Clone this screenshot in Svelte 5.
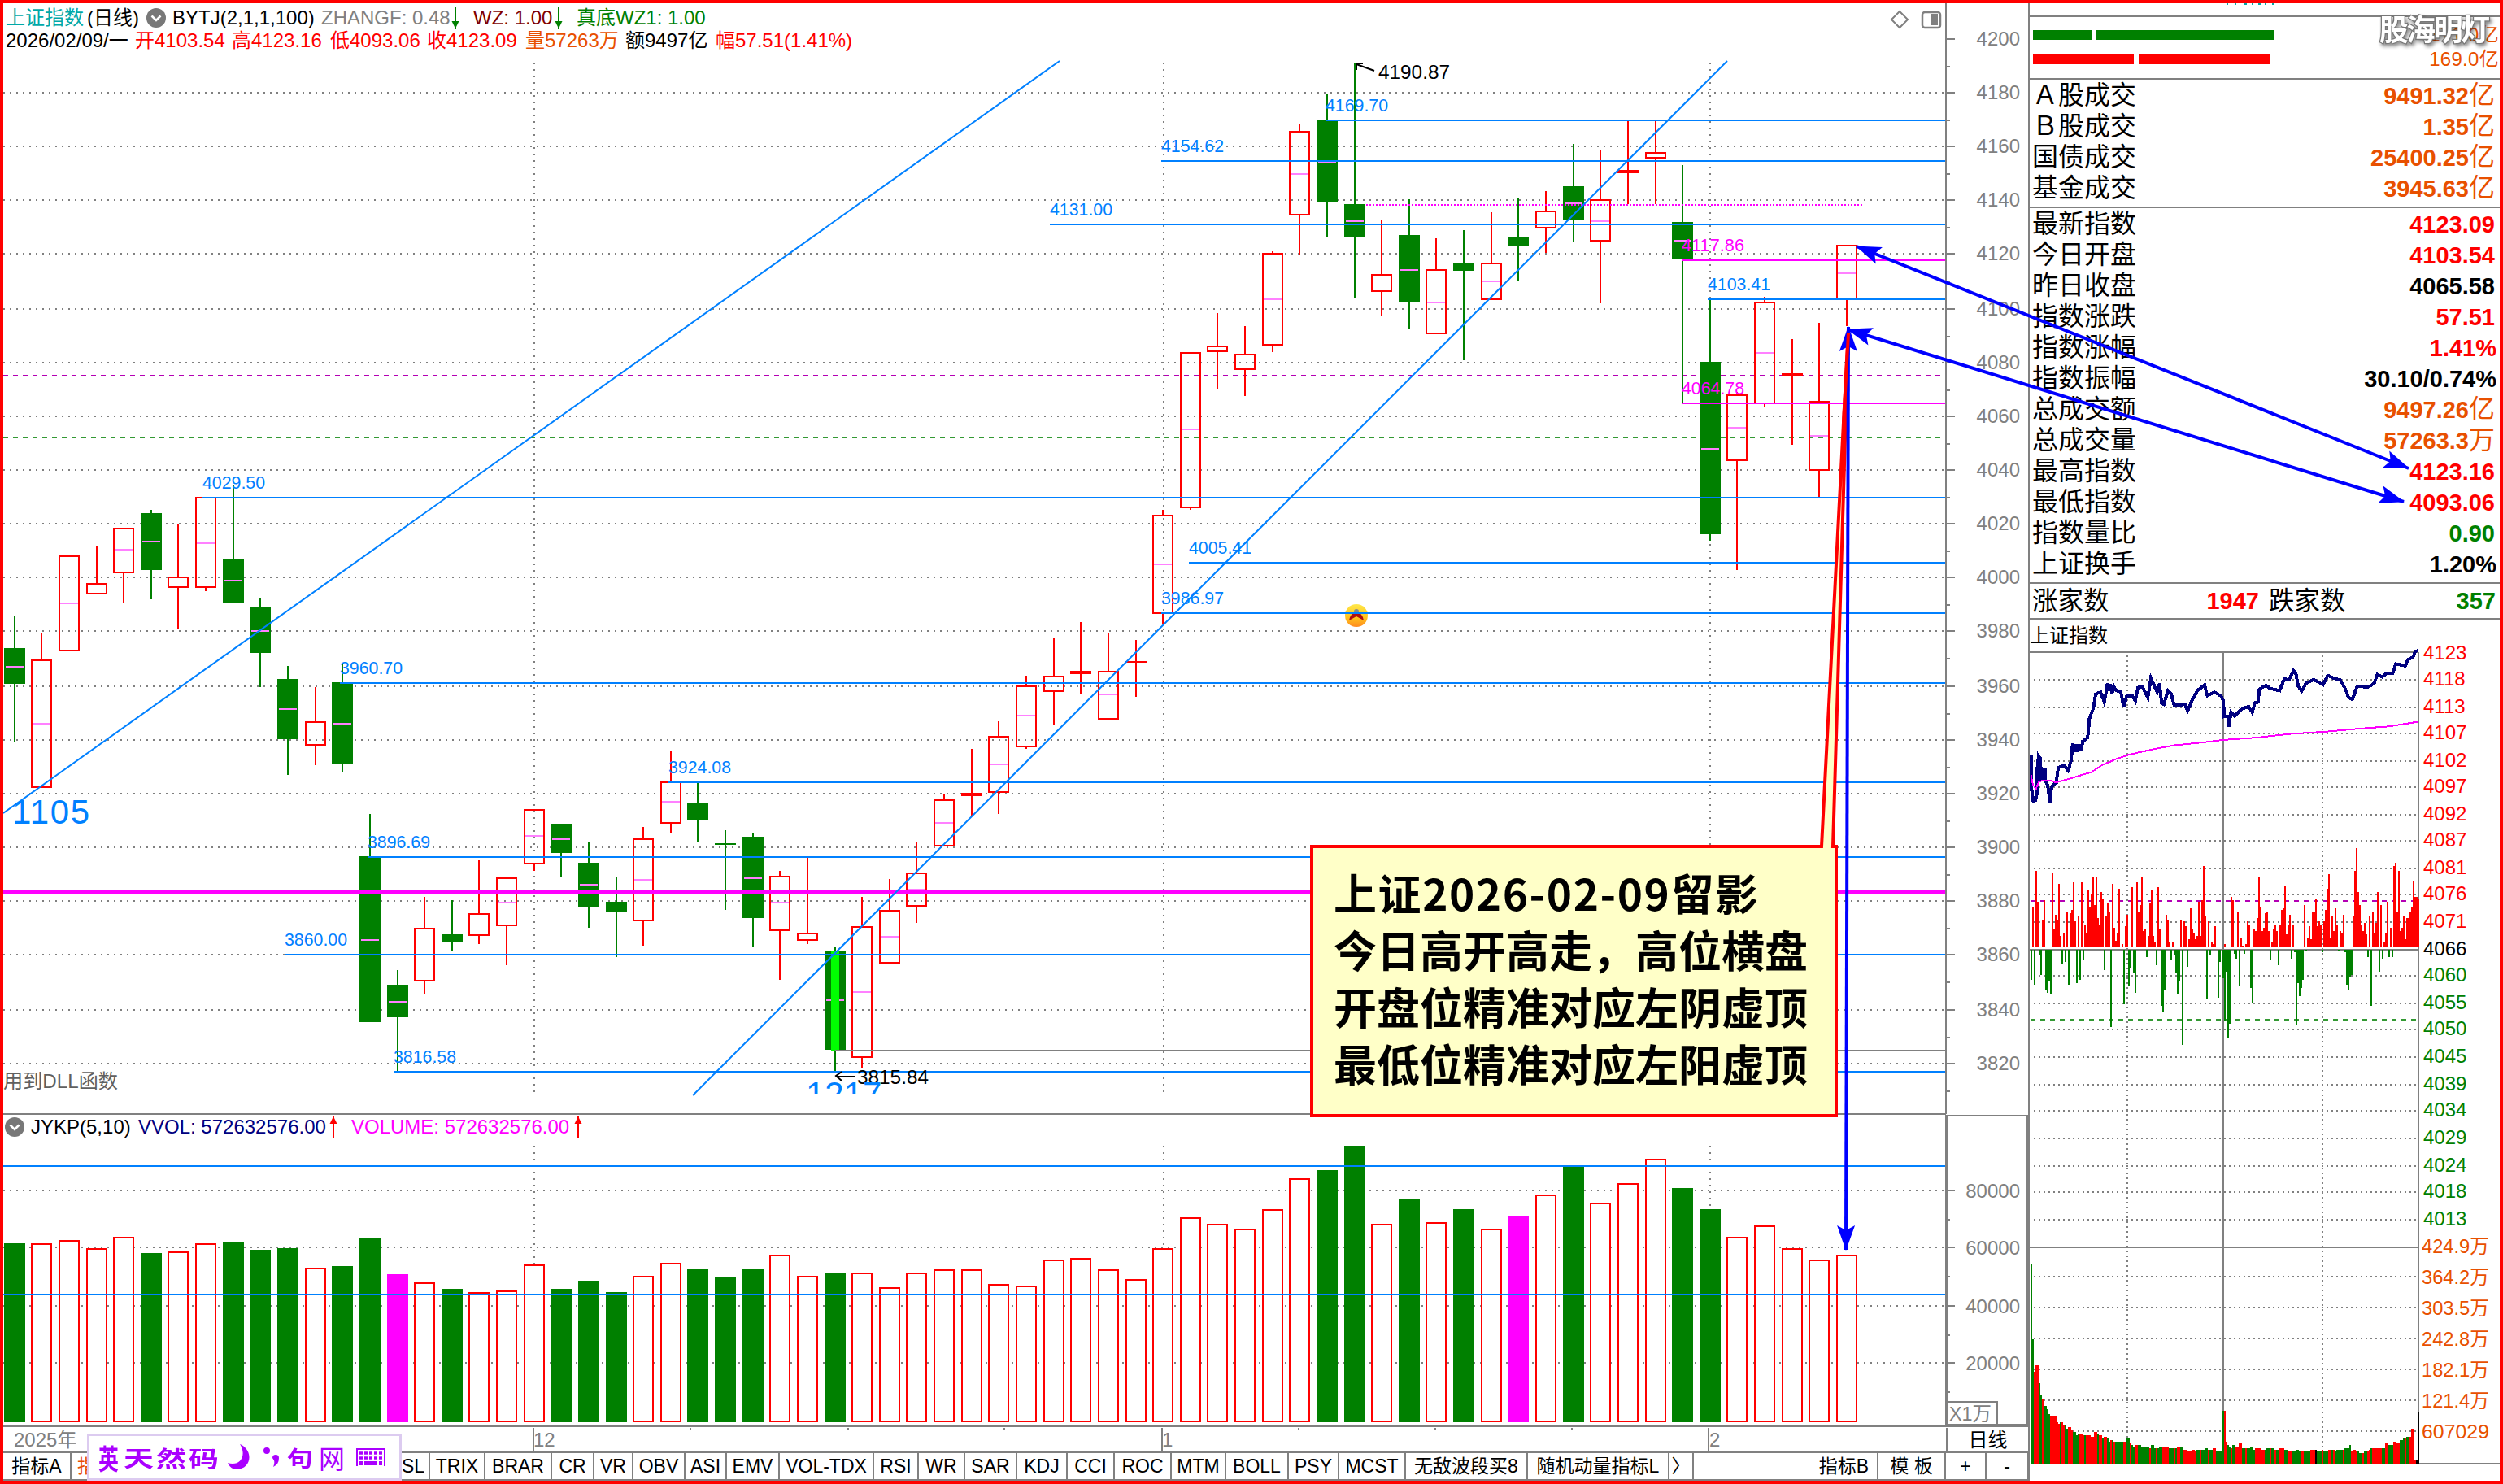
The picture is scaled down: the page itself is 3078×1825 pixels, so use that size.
<script lang="ts">
	type Candle = {
		up: boolean;
		high: number;
		top: number;
		bottom: number;
		low: number;
		mid: number;
	};

	const BAR_START = 17.7;
	const BAR_STEP = 33.63;
	const barX = (i: number) => Math.round(BAR_START + i * BAR_STEP);

	// direction, high, body top, body bottom, low, midpoint (0 = no mark)
	const rawCandles: [string, number, number, number, number, number][] = [
		['g', 757, 797, 841, 913, 820],
		['r', 779, 812, 968, 968, 890],
		['r', 683, 684, 800, 800, 742],
		['r', 671, 718, 730, 730, 0],
		['r', 650, 650, 704, 741, 676],
		['g', 627, 631, 701, 737, 666],
		['r', 645, 710, 722, 773, 0],
		['r', 612, 612, 722, 727, 668],
		['g', 597, 687, 741, 741, 714],
		['g', 735, 747, 803, 845, 776],
		['g', 819, 835, 909, 953, 872],
		['r', 845, 888, 916, 941, 0],
		['g', 817, 839, 939, 949, 890],
		['g', 1001, 1053, 1257, 1257, 1156],
		['g', 1193, 1211, 1251, 1318, 1232],
		['r', 1103, 1142, 1206, 1223, 0],
		['g', 1107, 1149, 1159, 1169, 0],
		['r', 1057, 1124, 1150, 1161, 0],
		['r', 1080, 1080, 1138, 1187, 1110],
		['r', 996, 996, 1062, 1071, 1028],
		['g', 1013, 1013, 1049, 1079, 1032],
		['g', 1035, 1061, 1115, 1141, 1088],
		['g', 1079, 1109, 1121, 1177, 0],
		['r', 1017, 1032, 1132, 1163, 1082],
		['r', 923, 962, 1012, 1025, 986],
		['g', 962, 987, 1009, 1035, 0],
		['g', 1021, 1037, 1039, 1119, 0],
		['g', 1025, 1029, 1129, 1165, 1080],
		['r', 1071, 1078, 1144, 1205, 1110],
		['r', 1054, 1148, 1156, 1161, 0],
		['g', 1165, 1169, 1291, 1318, 1230],
		['r', 1103, 1140, 1300, 1313, 1220],
		['r', 1081, 1120, 1184, 1184, 1152],
		['r', 1035, 1074, 1114, 1135, 1094],
		['r', 977, 984, 1040, 1040, 1012],
		['r', 921, 976, 978, 1003, 0],
		['r', 887, 906, 974, 1001, 940],
		['r', 831, 844, 918, 921, 880],
		['r', 785, 832, 850, 891, 0],
		['r', 765, 826, 828, 853, 0],
		['r', 779, 826, 884, 884, 854],
		['r', 787, 814, 814, 857, 0],
		['r', 627, 634, 754, 767, 694],
		['r', 434, 434, 624, 627, 528],
		['r', 385, 426, 432, 479, 0],
		['r', 401, 436, 454, 487, 0],
		['r', 309, 312, 424, 433, 368],
		['r', 153, 162, 264, 313, 214],
		['g', 115, 147, 249, 291, 200],
		['g', 77, 251, 291, 367, 272],
		['r', 271, 338, 358, 389, 0],
		['g', 245, 289, 371, 405, 332],
		['r', 293, 332, 410, 410, 372],
		['g', 283, 323, 333, 443, 0],
		['r', 261, 324, 368, 368, 346],
		['g', 243, 291, 303, 345, 0],
		['r', 235, 260, 280, 311, 0],
		['g', 177, 229, 271, 297, 250],
		['r', 185, 246, 296, 373, 272],
		['r', 149, 210, 212, 251, 0],
		['r', 149, 188, 194, 251, 0],
		['g', 203, 273, 319, 495, 296],
		['g', 369, 445, 657, 665, 552],
		['r', 482, 486, 566, 701, 526],
		['r', 365, 372, 496, 500, 434],
		['r', 417, 460, 462, 547, 0],
		['r', 397, 494, 578, 611, 536],
		['r', 302, 302, 368, 401, 336]
	];

	const candles: Candle[] = rawCandles.map(([d, high, top, bottom, low, mid]) => ({
		up: d === 'r',
		high,
		top,
		bottom,
		low,
		mid
	}));

	const volumeTops = [
		1529, 1529, 1525, 1535, 1521, 1541, 1539, 1529, 1527, 1537, 1535, 1559, 1557, 1523, 1567, 1577,
		1585, 1589, 1587, 1555, 1585, 1575, 1589, 1569, 1553, 1561, 1571, 1561, 1543, 1569, 1565, 1565,
		1583, 1565, 1561, 1561, 1579, 1581, 1549, 1547, 1561, 1573, 1535, 1497, 1505, 1511, 1487, 1449,
		1439, 1409, 1505, 1475, 1503, 1487, 1511, 1495, 1469, 1435, 1479, 1455, 1425, 1461, 1487, 1521,
		1507, 1535, 1549, 1543
	];
	const volumeColors = 'grrrrgrrgggrggmrgrrrgggrrgggrrgrrrrrrrrrrrrrrrrrggrgrgrmrgrrrggrrrrr';

	const priceGrid = [
		114, 180, 246, 312, 380, 446, 512, 578, 644, 710, 776, 844, 910, 976, 1042, 1108, 1174, 1242, 1308
	];
	const priceTicks = [48, ...priceGrid].map((y, i) => ({ y, label: 4200 - i * 20 }));
	const monthLines = [657, 1431, 2103];

	const levels = [
		{ value: '4169.70', x: 1630, y: 148 },
		{ value: '4154.62', x: 1428, y: 198 },
		{ value: '4131.00', x: 1291, y: 276 },
		{ value: '4103.41', x: 2100, y: 368 },
		{ value: '4029.50', x: 249, y: 612 },
		{ value: '4005.41', x: 1462, y: 692 },
		{ value: '3986.97', x: 1428, y: 754 },
		{ value: '3960.70', x: 418, y: 840 },
		{ value: '3924.08', x: 822, y: 962 },
		{ value: '3896.69', x: 452, y: 1054 },
		{ value: '3860.00', x: 350, y: 1174 },
		{ value: '3816.58', x: 484, y: 1318 },
		{ value: '4117.86', x: 2068, y: 320, gap: true },
		{ value: '4064.78', x: 2068, y: 496, gap: true }
	];

	const volumeTicks = [
		{ y: 1464, label: '80000' },
		{ y: 1534, label: '60000' },
		{ y: 1606, label: '40000' },
		{ y: 1676, label: '20000' }
	];

	const quote = [
		{ text: '2026/02/09/一', w: 159, tone: 'black' },
		{ text: '开4103.54', w: 119, tone: 'red' },
		{ text: '高4123.16', w: 121, tone: 'red' },
		{ text: '低4093.06', w: 119, tone: 'red' },
		{ text: '收4123.09', w: 121, tone: 'red' },
		{ text: '量57263万', w: 123, tone: 'orange' },
		{ text: '额9497亿', w: 111, tone: 'black' },
		{ text: '幅57.51(1.41%)', w: 180, tone: 'red' }
	];

	const tabs = [
		{ label: '指标A', w: 84 },
		{ label: '指标', w: 401, tone: 'orange' },
		{ label: 'SL', w: 40 },
		{ label: 'TRIX', w: 68 },
		{ label: 'BRAR', w: 82 },
		{ label: 'CR', w: 52 },
		{ label: 'VR', w: 48 },
		{ label: 'OBV', w: 64 },
		{ label: 'ASI', w: 51 },
		{ label: 'EMV', w: 65 },
		{ label: 'VOL-TDX', w: 116 },
		{ label: 'RSI', w: 55 },
		{ label: 'WR', w: 57 },
		{ label: 'SAR', w: 64 },
		{ label: 'KDJ', w: 62 },
		{ label: 'CCI', w: 58 },
		{ label: 'ROC', w: 70 },
		{ label: 'MTM', w: 67 },
		{ label: 'BOLL', w: 77 },
		{ label: 'PSY', w: 62 },
		{ label: 'MCST', w: 82 },
		{ label: '无敌波段买8', w: 150 },
		{ label: '随机动量指标L', w: 174 },
		{ label: '〉', w: 30 },
		{ label: '指标B', w: 227, end: true },
		{ label: '模 板', w: 83 },
		{ label: '+', w: 50 },
		{ label: '-', w: 52 }
	];

	const turnover = [
		{ name: 'Ａ股成交', value: '9491.32', unit: '亿', tone: 'orange' },
		{ name: 'Ｂ股成交', value: '1.35', unit: '亿', tone: 'orange' },
		{ name: '国债成交', value: '25400.25', unit: '亿', tone: 'orange' },
		{ name: '基金成交', value: '3945.63', unit: '亿', tone: 'orange' }
	];

	const stats = [
		{ name: '最新指数', value: '4123.09', unit: '', tone: 'red' },
		{ name: '今日开盘', value: '4103.54', unit: '', tone: 'red' },
		{ name: '昨日收盘', value: '4065.58', unit: '', tone: 'black' },
		{ name: '指数涨跌', value: '57.51', unit: '', tone: 'red' },
		{ name: '指数涨幅', value: '1.41%', unit: '', tone: 'red' },
		{ name: '指数振幅', value: '30.10/0.74%', unit: '', tone: 'black' },
		{ name: '总成交额', value: '9497.26', unit: '亿', tone: 'orange' },
		{ name: '总成交量', value: '57263.3', unit: '万', tone: 'orange' },
		{ name: '最高指数', value: '4123.16', unit: '', tone: 'red' },
		{ name: '最低指数', value: '4093.06', unit: '', tone: 'red' },
		{ name: '指数量比', value: '0.90', unit: '', tone: 'green' },
		{ name: '上证换手', value: '1.20%', unit: '', tone: 'black' }
	];

	const dayTicks = [
		[802, '4123'], [836, '4118'], [870, '4113'], [902, '4107'], [936, '4102'], [968, '4097'],
		[1002, '4092'], [1034, '4087'], [1068, '4081'], [1100, '4076'], [1134, '4071'], [1168, '4066'],
		[1200, '4060'], [1234, '4055'], [1266, '4050'], [1300, '4045'], [1334, '4039'], [1366, '4034'],
		[1400, '4029'], [1434, '4024'], [1466, '4018'], [1500, '4013']
	].map(([y, label]) => ({ y: Number(y), label }));
	const dayVolumeTicks = [
		[1534, '424.9万'], [1572, '364.2万'], [1610, '303.5万'], [1648, '242.8万'], [1686, '182.1万'],
		[1724, '121.4万'], [1762, '607029']
	].map(([y, label]) => ({ y: Number(y), label: String(label) }));

	const dayTone = (y: number) => (y < 1168 ? 'red' : y > 1168 ? 'green' : 'black');

	const dayX = (v: number) => 2480 + v / 2.622;
	const dayY = (v: number) => 760 + v / 2.8;
	const toPoints = (s: string) =>
		s
			.split(' ')
			.map((p) => p.split(',').map(Number))
			.map(([x, y]) => `${dayX(x).toFixed(1)},${dayY(y).toFixed(1)}`)
			.join(' ');

	const pricePath = toPoints(
		'44,470 46,595 51,632 58,628 63,605 64,515 68,475 73,482 77,560 82,520 88,522 90,560 97,575 105,638 110,580 125,567 131,515 150,508 163,525 172,495 178,432 183,462 189,435 194,462 200,435 205,458 210,425 226,412 232,345 245,310 252,262 268,255 280,290 290,225 295,252 300,228 305,260 310,235 318,250 333,255 343,308 352,270 370,268 380,285 388,240 402,236 420,275 430,207 450,255 458,225 464,292 472,297 485,250 495,260 505,300 540,298 548,320 560,290 580,250 603,230 612,268 635,255 655,268 664,285 666,340 680,338 682,375 688,325 700,338 725,312 745,305 757,325 765,292 775,290 780,245 800,232 815,243 845,250 860,210 875,213 890,180 897,188 905,235 916,252 930,225 955,212 985,230 1000,198 1020,208 1040,213 1055,240 1068,275 1080,280 1095,235 1130,238 1150,225 1160,195 1175,203 1190,190 1210,190 1220,158 1250,165 1260,142 1275,135 1282,115 1292,112'
	);
	const averagePath = toPoints(
		'43,540 50,575 60,588 68,565 80,560 105,560 125,566 160,556 200,543 240,530 270,508 320,485 360,470 430,454 500,439 600,428 660,420 770,412 880,399 1000,391 1100,381 1200,373 1292,357'
	);

	const parseBars = (s: string) =>
		s
			.trim()
			.split(/\s+/)
			.map((p) => p.split(':').map(Number))
			.map(([x, y]) => ({ x: 2496 + Math.round((x - 42) / 5.24) * 2, y: dayY(y) }));

	const buyBars = parseBars(`47:994 58:871 63:977 79:1040 84:972 110:876 115:1073 120:1022 126:1039 131:916 136:1095
		147:1084 157:1011 168:1016 173:1005 178:910 184:1044 194:1028 205:910 215:1056 220:1084 225:938 231:994 236:949
		241:893 246:988 252:893 257:1033 262:1056 267:944 273:966 283:1028 288:983 294:1011 304:916 309:1067 315:1112
		320:1084 325:932 336:1123 346:1061 351:1022 367:927 383:910 388:1011 393:988 399:893 404:1078 409:1073 420:1095
		425:983 430:938 436:1095 441:1117 451:927 456:1073 477:1022 483:1039 488:1117 498:1117 524:1039 535:1044 540:1061
		551:1106 556:1000 561:1073 566:1084 572:1106 577:1095 582:977 587:1095 592:972 598:854 603:1028 614:1044 624:1117
		629:1123 635:1061 666:1123 687:960 692:972 708:1011 718:1100 724:1128 734:1123 739:1044 744:1056 760:1073 765:1078
		771:1033 776:893 781:994 787:1078 792:1067 797:1016 802:1011 807:1078 818:1117 823:1073 828:1056 834:1078 844:1056
		849:1005 855:1000 860:921 865:1089 870:1056 876:1022 886:1056 923:988 934:1100 939:1061 944:1106 949:1011 955:1011
		960:966 965:1061 970:1044 976:1056 986:1044 991:1005 997:932 1002:882 1007:1100 1012:1028 1018:1078 1023:1000
		1028:1056 1038:1078 1043:1084 1049:1022 1080:1028 1086:871 1091:792 1096:944 1101:988 1107:1056 1112:1078 1117:1050
		1122:1089 1133:1028 1143:1011 1148:1084 1153:1050 1159:944 1170:988 1180:1117 1185:1084 1190:977 1201:1067 1211:854
		1216:843 1222:1011 1227:871 1232:1078 1237:1067 1243:1028 1248:1106 1253:1033 1258:1033 1264:1011 1269:994 1274:904
		1279:960 1285:960 1290:966`);
	const sellBars = parseBars(`42:1246 52:1263 68:1162 74:1229 89:1280 94:1291 100:1252 105:1296 142:1190 152:1184 163:1263
		189:1257 199:1246 210:1178 278:1212 299:1408 341:1330 357:1268 362:1207 372:1224 378:1291 415:1167 446:1196 462:1336
		467:1358 472:1280 493:1178 503:1162 509:1224 514:1296 519:1252 530:1470 545:1201 608:1313 619:1162 645:1308 650:1184
		661:1240 666:1386 671:1218 676:1448 682:1397 697:1156 703:1173 713:1268 729:1156 750:1274 755:1324 813:1178 839:1196
		881:1173 892:1150 897:1403 902:1257 907:1302 912:1274 918:1246 928:1145 981:1150 1033:1145 1054:1150 1059:1263
		1065:1280 1070:1235 1075:1229 1127:1167 1138:1336 1164:1218 1175:1173 1196:1167 1206:1167`);

	const volumeSteps =
		'42:762 47:1036 52:1156 58:1132 68:1198 73:1240 79:1258 84:1281 94:1293 100:1311 105:1317 126:1341 131:1347 136:1341 147:1353 157:1365 163:1359 173:1371 178:1377 189:1389 194:1383 210:1389 236:1395 246:1377 257:1383 262:1389 272:1401 278:1395 288:1401 294:1413 299:1407 310:1413 351:1401 362:1419 367:1425 372:1431 378:1425 399:1431 425:1437 430:1425 441:1437 456:1431 488:1437 514:1431 535:1443 545:1449 561:1443 571:1449 577:1443 603:1437 614:1443 629:1437 640:1449 661:1299 671:1413 676:1425 682:1431 687:1437 692:1425 702:1431 713:1419 724:1437 750:1431 760:1443 766:1437 787:1443 802:1437 828:1443 844:1437 860:1443 870:1449 892:1443 907:1449 944:1443 965:1449 976:1443 986:1449 997:1443 1018:1449 1028:1443 1054:1437 1065:1425 1075:1449 1080:1443 1091:1449 1101:1455 1112:1449 1128:1443 1133:1437 1185:1419 1195:1425 1211:1413 1222:1419 1232:1407 1238:1401 1253:1395 1264:1377 1269:1365 1279:1478 1285:1305'
			.split(' ')
			.map((p) => p.split(':').map(Number));
	const volumeRuns =
		'g42 r54 g68 r79 g82 r105 g136 r141 g152 r160 g180 r197 g215 r220 g257 r262 g272 r278 g288 r299 g304 r310 g315 r341 g351 r360 g367 r378 g388 r425 g430 r446 g452 r467 g486 r504 g509 r514 g525 r535 g577 r587 g592 r614 g619 r629 g640 r666 g676 r687 g692 r702 g724 r734 g740 r766 g797 r813 g818 r828 g834 r844 g860 r870 g886 r912 g923 r944 k960 g965 r981 g986 r1000 g1012 r1018 g1023 r1049 g1054 r1075 g1096 r1112 g1117 r1128 g1138 r1143 g1175 r1185 g1196 r1211 g1232 r1248 g1253 r1264 k1284'
			.split(' ')
			.map((p) => ({ tone: p[0], x: Number(p.slice(1)) }));

	const minuteVolumes = Array.from({ length: 239 }, (_, i) => {
		const x = 42 + i * 5.24 + 1;
		const step = volumeSteps.filter((s) => s[0] <= x).at(-1)!;
		const run = volumeRuns.filter((r) => r.x <= x + 1).at(-1)!;
		return { x: 2496 + i * 2, y: 1300 + step[1] / 2.987, tone: run.tone };
	});
</script>

{#snippet chevron()}
	<svg class="chevron" viewBox="0 0 24 24">
		<circle cx="12" cy="12" r="12" fill="#787878" />
		<path d="M6.5 9.5l5.5 5.5 5.5-5.5" fill="none" stroke="#fff" stroke-width="2.6" />
	</svg>
{/snippet}

{#snippet arrow(down: boolean)}
	<svg class="arrow" class:down viewBox="0 0 10 28">
		<path d="M5 0v28" stroke="currentColor" stroke-width="2" />
		<path d="M5 1l4.5 9h-9z" fill="currentColor" />
	</svg>
{/snippet}

<main class="terminal">
	<section class="charts">
		<div class="price-panel">
			<svg class="plot" width="2491" height="1367" viewBox="4 4 2491 1367">
				<g class="dotted">
					{#each priceGrid as y}
						<line x1="4" x2="2393" y1={y} y2={y} />
					{/each}
					{#each monthLines as x}
						<line x1={x} x2={x} y1="77" y2="1344" />
					{/each}
				</g>
				<line class="dash purple" x1="4" x2="2393" y1="462" y2="462" />
				<line class="dash forest" x1="4" x2="2393" y1="538" y2="538" />

				<g class="crisp">
					{#each candles as c, i}
						{@const x = barX(i)}
						{#if c.up}
							<g stroke="#f00" stroke-width="2" fill="none">
								<path d="M{x} {c.high}V{c.top}M{x} {c.bottom}V{c.low}" />
								<rect x={x - 12} y={c.top} width="24" height={c.bottom - c.top} />
								{#if c.bottom - c.top < 3}
									<path d="M{x - 13} {c.top}H{x + 13}" />
								{/if}
							</g>
						{:else}
							<path d="M{x} {c.high}V{c.low}" stroke="#008000" stroke-width="2" />
							<rect x={x - 13} y={c.top} width="26" height={c.bottom - c.top} fill="#008000" />
						{/if}
						{#if c.mid}
							<path d="M{x - 11} {c.mid}H{x + 11}" stroke="#ff80ff" stroke-width="2" />
						{/if}
						{#if i === 30}
							<rect x={x - 5} y="1170" width="10" height="123" fill="#0f0" />
						{/if}
					{/each}
				</g>

				<circle cx="1668" cy="757" r="14" fill="url(#face)" />
				<path d="M1659 763q2-10 9-10t9 10l-9-5z" fill="#b01010" />
				<circle cx="1668" cy="752" r="3" fill="#888" />

				<g class="crisp" stroke-width="2">
					<line x1="4" x2="2393" y1="1097" y2="1097" stroke="#f0f" stroke-width="4" />
					<line x1="1027" x2="2393" y1="1292" y2="1292" stroke="#808080" />
					{#each levels as l}
						<line x1={l.x} x2="2393" y1={l.y} y2={l.y} stroke={l.gap ? '#f0f' : '#0080ff'} />
					{/each}
					<line x1="1680" x2="2290" y1="252" y2="252" stroke="#f0f" stroke-dasharray="2 2" />
				</g>
				<g stroke="#0080ff" stroke-width="2">
					<line x1="4" y1="1000" x2="1303" y2="75" />
					<line x1="852" y1="1347" x2="2124" y2="75" />
				</g>

				{#each levels as l}
					<text class="level" class:gap={l.gap} x={l.x} y={l.y - 11} textLength="77" lengthAdjust="spacingAndGlyphs">{l.value}</text>
				{/each}

				<path d="M1690 87l-22-8M1668 86v-8h8" fill="none" stroke="#000" stroke-width="2" />
				<text class="extreme" x="1695" y="97" textLength="88" lengthAdjust="spacingAndGlyphs">4190.87</text>
				<path d="M1052 1324h-23M1035 1318l-7 5 7 6" fill="none" stroke="#000" stroke-width="2" />
				<text class="extreme" x="1054" y="1333" textLength="88" lengthAdjust="spacingAndGlyphs">3815.84</text>
				<text class="turn" x="15" y="1013" textLength="95">1105</text>
				<text class="turn" x="991" y="1360" clip-path="url(#plot-clip)">1217</text>
				<text class="note" x="4" y="1338" textLength="141" lengthAdjust="spacingAndGlyphs">用到DLL函数</text>

				<g class="crisp" stroke="#808080" stroke-width="2">
					<line x1="2393" x2="2393" y1="4" y2="1370" />
					<line x1="4" x2="2393" y1="1370" y2="1370" />
					{#each priceTicks as t}
						<line x1="2394" x2="2404" y1={t.y} y2={t.y} />
						<line x1="2394" x2="2398" y1={t.y + 34} y2={t.y + 34} />
					{/each}
				</g>
				{#each priceTicks as t}
					<text class="axis" x="2484" y={t.y + 8}>{t.label}</text>
				{/each}

				<path d="M2336 14l10 10-10 10-10-10z" fill="none" stroke="#808080" stroke-width="2" />
				<rect x="2364" y="15" width="22" height="19" rx="3" fill="none" stroke="#808080" stroke-width="2.5" />
				<rect x="2375" y="17" width="8" height="14" fill="#808080" />

				<defs>
					<clipPath id="plot-clip"><rect x="4" y="70" width="2389" height="1275" /></clipPath>
					<linearGradient id="face" x1="0" y1="0" x2="0" y2="1">
						<stop offset="0" stop-color="#ffe84a" />
						<stop offset=".6" stop-color="#ffc21c" />
						<stop offset="1" stop-color="#ff8a20" />
					</linearGradient>
				</defs>
			</svg>

			<header class="legend">
				<div class="legend-row">
					<span class="teal" style:width="100px">上证指数</span>
					<span style:width="73px">(日线)</span>
					{@render chevron()}
					<span class="study" style:width="183px">BYTJ(2,1,1,100)</span>
					<span class="grey" style:width="160px">ZHANGF: 0.48</span>
					<span class="green slot">{@render arrow(true)}</span>
					<span class="maroon" style:width="100px">WZ: 1.00</span>
					<span class="green slot">{@render arrow(true)}</span>
					<span class="green">真底WZ1: 1.00</span>
				</div>
				<div class="legend-row">
					{#each quote as q}
						<span class={q.tone} style:width="{q.w}px">{q.text}</span>
					{/each}
				</div>
			</header>
		</div>

		<div class="volume-panel">
			<svg class="plot" width="2491" height="385" viewBox="4 1371 2491 385">
				<g class="dotted">
					{#each volumeTicks as t}
						<line x1="4" x2="2393" y1={t.y} y2={t.y} />
					{/each}
					{#each monthLines as x}
						<line x1={x} x2={x} y1="1409" y2="1749" />
					{/each}
				</g>
				<g class="crisp">
					{#each volumeTops as top, i}
						{@const tone = volumeColors[i]}
						{#if tone === 'r'}
							<rect x={barX(i) - 12} y={top + 1} width="24" height={1747 - top} fill="#fff" stroke="#f00" stroke-width="2" />
						{:else}
							<rect x={barX(i) - 13} y={top} width="26" height={1749 - top} fill={tone === 'g' ? '#008000' : '#f0f'} />
						{/if}
					{/each}
				</g>
				<g class="crisp" stroke-width="2">
					<line x1="4" x2="2393" y1="1434" y2="1434" stroke="#0080ff" />
					<line x1="4" x2="2393" y1="1592" y2="1592" stroke="#0080ff" />
					<line x1="4" x2="2393" y1="1754" y2="1754" stroke="#808080" />
				</g>
				<rect class="crisp" x="2394" y="1371" width="100" height="382" fill="none" stroke="#808080" stroke-width="4" />
				<g class="crisp" stroke="#808080" stroke-width="2">
					{#each volumeTicks as t}
						<line x1="2396" x2="2404" y1={t.y} y2={t.y} />
						<line x1="2396" x2="2398" y1={t.y + 36} y2={t.y + 36} />
					{/each}
					<path d="M2396 1724h60v28" fill="none" />
				</g>
				{#each volumeTicks as t}
					<text class="axis" x="2484" y={t.y + 9}>{t.label}</text>
				{/each}
				<text class="unit" x="2397" y="1747" textLength="52" lengthAdjust="spacingAndGlyphs">X1万</text>
			</svg>
			<div class="legend volume-legend">
				<div class="legend-row">
					{@render chevron()}
					<span class="study" style:width="132px">JYKP(5,10)</span>
					<span class="navy" style:width="235px">VVOL: 572632576.00</span>
					<span class="red slot">{@render arrow(false)}</span>
					<span class="magenta" style:width="274px">VOLUME: 572632576.00</span>
					<span class="red slot">{@render arrow(false)}</span>
				</div>
			</div>
		</div>

		<div class="dates">
			<svg width="2389" height="30" viewBox="4 1756 2389 30">
				<path
					class="crisp"
					d="M656 1755v30M1429 1755v30M2101 1755v30M849 1755v4M1043 1755v4M1235 1755v4M1597 1755v4M1765 1755v4M1933 1755v4"
					stroke="#808080"
					stroke-width="2"
				/>
				<text class="month" x="17" y="1779">2025年</text>
				<text class="month" x="656" y="1779">12</text>
				<text class="month" x="1429" y="1779">1</text>
				<text class="month" x="2102" y="1779">2</text>
			</svg>
			<span class="period">日线</span>
		</div>

		<nav class="tabs">
			{#each tabs as t}
				<span class="tab {t.tone ?? ''}" class:end={t.end} style:width="{t.w}px">{t.label}</span>
			{/each}
		</nav>
	</section>

	<aside class="side">
		<div class="flow">
			<div class="flow-bar">
				<i class="sell" style:width="72px"></i>
				<i class="sell" style:width="218px"></i>
				<span>171.0亿</span>
			</div>
			<div class="flow-bar">
				<i class="buy" style:width="124px"></i>
				<i class="buy" style:width="162px"></i>
				<span>169.0亿</span>
			</div>
		</div>
		{#each [turnover, stats] as group}
			<dl class="stats">
				{#each group as s}
					<div class="stat">
						<dt>{s.name}</dt>
						<dd class={s.tone}><b class:flush={s.value.endsWith('%')}>{s.value}</b>{s.unit}</dd>
					</div>
				{/each}
			</dl>
		{/each}
		<div class="breadth">
			<span>涨家数</span><b class="red">1947</b>
			<span class="fallers">跌家数</span><b class="green">357</b>
		</div>
		<div class="day-title">上证指数</div>
		<svg class="plot day" width="579" height="1019" viewBox="2495 801 579 1019">
			<g class="dotted fine">
				{#each dayTicks as t}
					{#if t.label !== '4123' && t.label !== '4066'}
						<line x1="2500" x2="2972" y1={t.y} y2={t.y} />
					{/if}
				{/each}
				{#each [1570, 1608, 1646, 1684, 1722, 1760] as y}
					<line x1="2500" x2="2972" y1={y} y2={y} />
				{/each}
				<line x1="2615" x2="2615" y1="806" y2="1800" />
				<line x1="2855" x2="2855" y1="806" y2="1800" />
			</g>
			<line class="dash purple" x1="2496" x2="2972" y1="1108" y2="1108" />
			<line class="dash forest" x1="2496" x2="2972" y1="1254" y2="1254" />
			<g class="crisp" stroke="#808080" stroke-width="2">
				<path d="M2495 802h478M2973 802v998M2733 802v998M2495 1168h478M2495 1534h478M2973 1800h101" fill="none" />
			</g>
			<g class="crisp">
				{#each buyBars as b}
					<rect x={b.x} y={b.y} width="2" height={1165 - b.y} fill="#f00" />
				{/each}
				{#each sellBars as b}
					<rect x={b.x} y="1168" width="2" height={b.y - 1168} fill="#008000" />
				{/each}
				{#each minuteVolumes as v}
					<rect x={v.x} y={v.y} width="2" height={1801 - v.y} fill={v.tone === 'g' ? '#008000' : v.tone === 'r' ? '#f00' : '#000'} />
				{/each}
			</g>
			<polyline class="crisp" points={pricePath} fill="none" stroke="#000080" stroke-width="4" />
			<polyline class="crisp" points={averagePath} fill="none" stroke="#f0f" stroke-width="2" />
			{#each dayTicks as t}
				<text class="day-label {dayTone(t.y)}" x="2979" y={t.y + (t.y === 802 ? 9 : 7)}>{t.label}</text>
			{/each}
			{#each dayVolumeTicks as t}
				<text class="day-label orange" x="2977" y={t.y + 7} textLength="83" lengthAdjust="spacingAndGlyphs">{t.label}</text>
			{/each}
		</svg>
	</aside>

	<svg class="overlay" width="3078" height="1825" viewBox="0 0 3078 1825">
		<g fill="#00a8a8">
			<path d="M2738 4h2v2h-2zM2748 4h2v2h-2zM2759 4h4v2h-4zM2769 4h2v2h-2zM2777 4h3v2h-3zM2785 4h2v2h-2zM2794 4h2v2h-2z" />
		</g>
		<path
			d="M1613 1041H2240L2273 404L2254 1041H2258V1372H1613z"
			fill="#ffffc8"
			stroke="#f00"
			stroke-width="4"
		/>
		<g class="callout">
			<text x="1640" y="1120" textLength="522">上证2026-02-09留影</text>
			<text x="1640" y="1190" textLength="583">今日高开高走，高位横盘</text>
			<text x="1640" y="1260" textLength="583">开盘位精准对应左阴虚顶</text>
			<text x="1640" y="1330" textLength="583">最低位精准对应左阳虚顶</text>
		</g>
		<defs>
			<marker id="head" markerUnits="userSpaceOnUse" markerWidth="34" markerHeight="24" refX="31" refY="12" orient="auto-start-reverse">
				<path d="M32 12L1 1l6 11-6 11z" fill="#00f" />
			</marker>
		</defs>
		<g stroke="#00f" stroke-width="4" marker-start="url(#head)" marker-end="url(#head)">
			<line x1="2283" y1="303" x2="2962" y2="576" />
			<line x1="2272" y1="405" x2="2956" y2="617" />
			<line x1="2273" y1="402" x2="2270" y2="1537" />
		</g>
		<path d="M2273 410L2267 520" stroke="#f00" stroke-width="4" />
		<text class="watermark" x="2926" y="50" textLength="136">股海明灯</text>
	</svg>

	<div class="ime">
		<span class="lang">英</span>
		<span class="scheme">天然码</span>
		<svg width="32" height="34" viewBox="0 0 32 34"><path d="M17 1C34 8 32 32 12 32Q6 32 2 24C17 29 26 15 17 1z" fill="#a0f" /></svg>
		<svg class="punct" width="24" height="34" viewBox="0 0 24 34">
			<circle cx="5" cy="9" r="4" fill="#a0f" />
			<path d="M12 18a4 4 0 0 1 8 0q0 8-7 11q2-5 1-8z" fill="#a0f" />
		</svg>
		<span class="mode">句</span>
		<span class="web">网</span>
		<svg width="38" height="24" viewBox="0 0 38 24">
			<path d="M2 23V2h34v21" fill="none" stroke="#a0f" stroke-width="2" />
			<path d="M5 7h29M5 13h29" stroke="#a0f" stroke-width="3.5" stroke-dasharray="4 2" />
			<path d="M5 19.5h4M11 19.5h16M29 19.5h4" stroke="#a0f" stroke-width="5" />
		</svg>
	</div>
</main>

<style>
	:global(body) {
		background: #fff;
	}

	.terminal {
		position: relative;
		display: flex;
		box-sizing: border-box;
		width: 3078px;
		height: 1825px;
		border: 4px solid #f00;
		overflow: hidden;
		background: #fff;
		color: #000;
		font-family: 'Liberation Sans', 'Noto Sans CJK SC', sans-serif;
		font-size: 24px;
		white-space: nowrap;
	}

	.charts {
		display: flex;
		flex-direction: column;
		width: 2490px;
	}

	.price-panel,
	.volume-panel {
		position: relative;
	}

	.plot {
		display: block;
	}

	.day {
		overflow: visible;
	}

	.crisp,
	.dotted,
	.dash {
		shape-rendering: crispEdges;
	}

	.dotted line {
		stroke: #808080;
		stroke-width: 2;
		stroke-dasharray: 2 6;
	}

	.dotted.fine line {
		stroke-dasharray: 2 4;
	}

	.dash {
		stroke-width: 2;
		stroke-dasharray: 6 6;
	}

	.purple {
		stroke: #b400b4;
	}

	.forest {
		stroke: #339933;
	}

	.level {
		fill: #0080ff;
		font-size: 22px;
	}

	.level.gap {
		fill: #f0f;
	}

	.extreme,
	.month,
	.unit,
	.note {
		font-size: 24px;
	}

	.turn {
		fill: #0080ff;
		font-size: 42px;
	}

	.note {
		fill: #606060;
	}

	.axis {
		fill: #808080;
		font-size: 24px;
		text-anchor: end;
	}

	.unit,
	.month {
		fill: #808080;
	}

	.legend {
		position: absolute;
		top: 4px;
		left: 3px;
	}

	.volume-legend {
		top: 1px;
		left: 2px;
	}

	.legend-row {
		display: flex;
		align-items: center;
		height: 28px;
		line-height: 28px;
	}

	.legend-row span {
		flex: none;
	}

	.legend-row .study {
		margin-left: 8px;
	}

	.chevron {
		flex: none;
		width: 24px;
		height: 24px;
	}

	.slot {
		display: flex;
		width: 27px;
	}

	.arrow {
		width: 10px;
		height: 28px;
	}

	.arrow.down {
		transform: rotate(180deg);
	}

	.dates {
		display: flex;
		height: 29px;
		border-bottom: 2px solid #808080;
	}

	.period {
		flex: 1;
		border-left: 2px solid #808080;
		text-align: center;
		line-height: 30px;
	}

	.tabs {
		display: flex;
		height: 33px;
		border-bottom: 2px solid #808080;
		font-size: 23px;
		line-height: 32px;
	}

	.tab {
		box-sizing: border-box;
		flex: none;
		overflow: hidden;
		border-right: 2px solid #808080;
		text-align: center;
	}

	.tab.orange {
		padding-left: 7px;
		border: 0;
		text-align: left;
	}

	.tab.end {
		padding-right: 10px;
		text-align: right;
	}

	.side {
		display: flex;
		flex: 1;
		flex-direction: column;
		border-left: 2px solid #808080;
	}

	.flow {
		display: flex;
		flex-direction: column;
		height: 61px;
		margin-top: 15px;
		padding: 7px 2px 7px 4px;
		border-top: 2px solid #808080;
		border-bottom: 2px solid #808080;
	}

	.flow-bar {
		display: flex;
		align-items: center;
		gap: 6px;
		height: 30px;
	}

	.flow-bar i {
		height: 12px;
	}

	.flow-bar span {
		margin: -6px 0 0 auto;
		color: #e85000;
		letter-spacing: 0.3px;
	}

	.sell {
		background: #008000;
	}

	.buy {
		background: #f00;
	}

	.stats {
		margin: 0;
		padding: 0 7px 4px 3px;
		border-bottom: 2px solid #808080;
	}

	.stat {
		display: flex;
		justify-content: space-between;
		height: 38px;
		font-size: 32px;
		line-height: 38px;
	}

	.stat dd {
		margin: 0;
	}

	.stat b,
	.breadth b {
		font-size: 29px;
	}

	.flush {
		margin-right: -2px;
	}

	.breadth {
		display: flex;
		align-items: center;
		height: 42px;
		padding: 0 6px 0 3px;
		border-bottom: 2px solid #808080;
		font-size: 31.5px;
		line-height: 42px;
	}

	.breadth b {
		flex: 1;
		text-align: right;
	}

	.fallers {
		margin-left: 12px;
	}

	.day-title {
		height: 39px;
		line-height: 39px;
	}

	.day-label {
		font-size: 24px;
	}

	.overlay {
		position: absolute;
		top: -4px;
		left: -4px;
	}

	.callout text {
		font-family: 'Noto Sans CJK SC', sans-serif;
		font-size: 53px;
		font-weight: 700;
	}

	.watermark {
		fill: #fff;
		stroke: #777;
		stroke-width: 2.5;
		paint-order: stroke;
		font-size: 36px;
		font-weight: 700;
		filter: drop-shadow(2px 3px 2px rgba(0, 0, 0, 0.45));
	}

	.ime {
		position: absolute;
		top: 1759px;
		left: 103px;
		display: flex;
		align-items: center;
		box-sizing: border-box;
		width: 387px;
		height: 58px;
		padding-left: 11px;
		border: 3px solid #dccbf0;
		background: #fff;
		color: #a0f;
	}

	.lang {
		width: 31px;
		font-size: 25px;
		font-weight: 700;
		transform: scaleY(1.35);
	}

	.scheme {
		width: 126px;
		font-size: 37px;
		font-weight: 700;
		letter-spacing: 3px;
		transform: scaleY(0.75);
	}

	.punct {
		margin: 0 6px 0 13px;
	}

	.mode {
		width: 39px;
		font-size: 32px;
		font-weight: 700;
		transform: scaleY(0.85);
	}

	.web {
		width: 32px;
		margin-right: 13px;
		font-size: 32px;
	}

	.black {
		color: #000;
		fill: #000;
	}

	.red {
		color: #f00;
		fill: #f00;
	}

	.green {
		color: #008000;
		fill: #008000;
	}

	.orange {
		color: #e85000;
		fill: #e85000;
	}

	.teal {
		color: #00a8a8;
	}

	.grey {
		color: #808080;
	}

	.maroon {
		color: #800000;
	}

	.navy {
		color: #000080;
	}

	.magenta {
		color: #f0f;
	}
</style>
